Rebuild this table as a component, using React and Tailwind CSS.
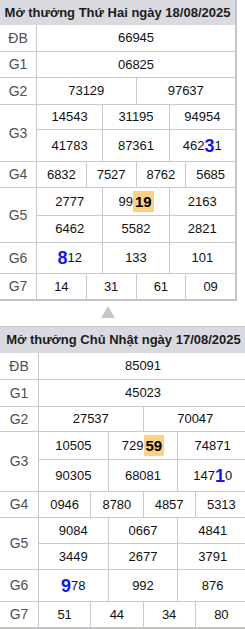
const spans = { 1: 'col-span-12', 2: 'col-span-6', 3: 'col-span-4', 4: 'col-span-3' }
const heights = {
  24: 'h-[24px]',
  25: 'h-[25px]',
  26: 'h-[26px]',
  27: 'h-[27px]',
  30: 'h-[30px]',
  31: 'h-[31px]',
}
const labelRows = { 1: 'row-span-1', 2: 'row-span-2' }

const Hi = ({ children }) => (
  <span className="bg-[#fdd27e] px-[2px] text-[15px] leading-[21px] font-bold text-black">{children}</span>
)
const Big = ({ children }) => (
  <span className="text-[18px] font-bold leading-none text-[#1414ff]">{children}</span>
)

const monday = {
  title: 'Mở thưởng Thứ Hai ngày 18/08/2025',
  width: 'w-[237px]',
  cols: 'grid-cols-[36px_repeat(12,1fr)]',
  rows: [
    { label: 'ĐB', lines: [[26, ['66945']]] },
    { label: 'G1', lines: [[25, ['06825']]] },
    { label: 'G2', lines: [[26, ['73129', '97637']]] },
    {
      label: 'G3',
      lines: [
        [24, ['14543', '31195', '94954']],
        [31, ['41783', '87361', <>462<Big>3</Big>1</>]],
      ],
    },
    { label: 'G4', lines: [[25, ['6832', '7527', '8762', '5685']]] },
    {
      label: 'G5',
      lines: [
        [27, ['2777', <>99<Hi>19</Hi></>, '2163']],
        [26, ['6462', '5582', '2821']],
      ],
    },
    { label: 'G6', lines: [[30, [<><Big>8</Big>12</>, '133', '101']]] },
    { label: 'G7', lines: [[25, ['14', '31', '61', '09']]] },
  ],
}

const sunday = {
  title: 'Mở thưởng Chủ Nhật ngày 17/08/2025',
  width: 'w-[247px]',
  cols: 'grid-cols-[38px_repeat(12,1fr)]',
  rows: [
    { label: 'ĐB', lines: [[26, ['85091']]] },
    { label: 'G1', lines: [[26, ['45023']]] },
    { label: 'G2', lines: [[24, ['27537', '70047']]] },
    {
      label: 'G3',
      lines: [
        [27, ['10505', <>729<Hi>59</Hi></>, '74871']],
        [31, ['90305', '68081', <>147<Big>1</Big>0</>]],
      ],
    },
    { label: 'G4', lines: [[25, ['0946', '8780', '4857', '5313']]] },
    {
      label: 'G5',
      lines: [
        [25, ['9084', '0667', '4841']],
        [25, ['3449', '2677', '3791']],
      ],
    },
    { label: 'G6', lines: [[31, [<><Big>9</Big>78</>, '992', '876']]] },
    { label: 'G7', lines: [[25, ['51', '44', '34', '80']]] },
  ],
}

function Results({ data, top }) {
  return (
    <div className={`${data.width} shrink-0 border-b-2 border-[#c3c4cb] ${top ? 'border-t border-t-[#c9cad0]' : 'border-r-2'}`}>
      <div className={`${top ? 'h-[26px]' : 'h-[25px]'} bg-[#d9dadf] flex items-center justify-center text-[13px] font-bold text-[#1c1c1c] whitespace-nowrap`}>
        {data.title}
      </div>
      <div className={`grid ${data.cols} gap-px bg-[#c9cad0]`}>
        {data.rows.map((row) => (
          <Row key={row.label} row={row} />
        ))}
      </div>
    </div>
  )
}

function Row({ row }) {
  return (
    <>
      <div className={`${labelRows[row.lines.length]} bg-white flex items-center justify-center text-[14px] text-[#505050]`}>
        {row.label}
      </div>
      {row.lines.map(([h, cells], i) =>
        cells.map((c, j) => (
          <div
            key={`${i}-${j}`}
            className={`${spans[cells.length]} ${heights[h]} ${j === 0 && i > 0 ? 'col-start-2' : ''} bg-white flex items-center justify-center text-[13px] text-[#111]`}
          >
            {c}
          </div>
        ))
      )}
    </>
  )
}

export default function App() {
  return (
    <div className="w-[245px] h-[629px] overflow-hidden bg-white font-['Liberation_Sans',Arial,sans-serif]">
      <Results data={monday} />
      <div className="h-[25px] pl-[101px] pt-[5px]">
        <svg width="14" height="12" viewBox="0 0 14 12">
          <polygon points="7,0 14,12 0,12" fill="#c8c8c8" />
        </svg>
      </div>
      <Results data={sunday} top />
    </div>
  )
}
